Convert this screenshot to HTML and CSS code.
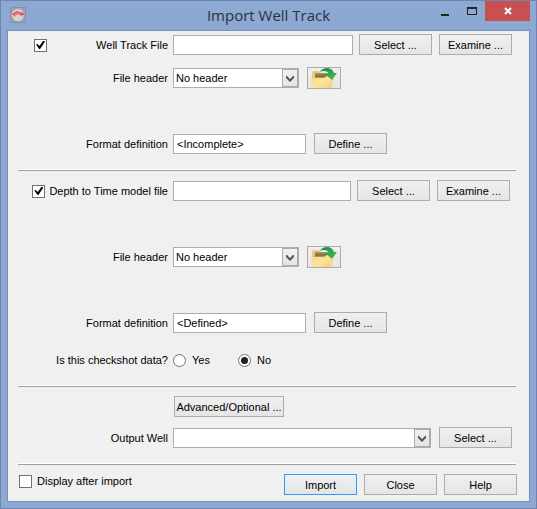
FILE: index.html
```html
<!DOCTYPE html>
<html lang="en">
<head>
<meta charset="utf-8">
<title>Import Well Track</title>
<link rel="stylesheet" href="styles.css">
</head>
<body>
<svg class="defs" aria-hidden="true">
  <defs>
    <linearGradient id="folder-fill" x1="0" y1="0" x2="1" y2="1">
      <stop offset="0" stop-color="#f7d888"/>
      <stop offset=".5" stop-color="#fde39a"/>
      <stop offset="1" stop-color="#f0cd78"/>
    </linearGradient>
    <linearGradient id="folder-inside" x1="0" y1="0" x2="0" y2="1">
      <stop offset="0" stop-color="#b99a5a"/>
      <stop offset=".5" stop-color="#7d6a44"/>
      <stop offset="1" stop-color="#d9b96f"/>
    </linearGradient>
    <linearGradient id="arrow-fill" x1="0" y1="0" x2="1" y2="1">
      <stop offset="0" stop-color="#128a58"/>
      <stop offset="1" stop-color="#4cc04a"/>
    </linearGradient>
    <symbol id="open-folder" viewBox="0 0 32 20">
      <path d="M4 20V4l1-1h6l2 2h10l2 5-2 10z" fill="#ecc978"/>
      <path d="M7 5h15v6H7z" fill="url(#folder-inside)"/>
      <path d="M4 20L3 10h13l3-2h8l-4 12z" fill="url(#folder-fill)"/>
      <path d="M12 4c2-5 12-6 14 1h3l-5 7-7-6h4c-1-3-6-4-9-2z" fill="url(#arrow-fill)"/>
    </symbol>
    <symbol id="chevron" viewBox="0 0 8 7">
      <path d="M0 1h1l3 3 3-3h1v2L4 7 0 3z" fill="#555"/>
    </symbol>
  </defs>
</svg>
<div class="window">
  <header class="titlebar">
    <svg class="app-icon" viewBox="0 0 16 16" aria-hidden="true">
      <rect x=".5" y=".5" width="15" height="15" fill="#92a0b8" stroke="#8192ad"/>
      <circle cx="8" cy="8" r="6.500" fill="#d2d3d4" stroke="#a9a5a6"/>
      <path d="M2 7l3-2 2-1 3 1 4 1v2h-2l1 2-3-2H6l-2 2v-2H2z" fill="#e1595c"/>
      <path d="M5 7h5" stroke="#f1b3b3"/>
    </svg>
    <h1 class="title">Import Well Track</h1>
    <div class="window-controls">
      <button class="caption-button" type="button" aria-label="Minimize"><svg viewBox="0 0 10 10"><path d="M1 8h8v2H1z" fill="#222"/></svg></button>
      <button class="caption-button" type="button" aria-label="Maximize"><svg viewBox="0 0 10 10"><path d="M0 1h10v8H0zM1 3v5h8V3z" fill="#222" fill-rule="evenodd"/></svg></button>
      <button class="caption-button caption-close" type="button" aria-label="Close window"><svg viewBox="0 0 10 10"><path d="M2 2l6 6m0-6l-6 6" stroke="#fff" stroke-width="2"/></svg></button>
    </div>
  </header>
  <form class="client">
    <section class="group">
      <div class="row">
        <div class="lead">
          <input class="check check-lead" type="checkbox" id="use-track" aria-label="Use well track file" checked>
          <label for="track-file">Well Track File</label>
        </div>
        <input class="field grow" type="text" id="track-file">
        <div class="pair">
          <button class="button" type="button">Select ...</button>
          <button class="button" type="button">Examine ...</button>
        </div>
      </div>
      <div class="row row-header">
        <div class="lead"><label for="track-header">File header</label></div>
        <div class="combo combo-small">
          <select id="track-header"><option>No header</option></select>
          <span class="combo-arrow"><svg><use href="#chevron"/></svg></span>
        </div>
        <button class="icon-button" type="button" aria-label="Open file"><svg><use href="#open-folder"/></svg></button>
      </div>
      <div class="row row-format">
        <div class="lead"><label for="track-format">Format definition</label></div>
        <input class="field field-format" type="text" id="track-format" value="&lt;Incomplete&gt;">
        <button class="button" type="button">Define ...</button>
      </div>
    </section>
    <hr class="rule">
    <section class="group">
      <div class="row row-inset">
        <div class="lead lead-check">
          <input class="check" type="checkbox" id="use-model" checked>
          <label for="use-model">Depth to Time model file</label>
        </div>
        <input class="field grow" type="text" aria-label="Depth to Time model file">
        <div class="pair">
          <button class="button" type="button">Select ...</button>
          <button class="button" type="button">Examine ...</button>
        </div>
      </div>
      <div class="row row-header row-header-far">
        <div class="lead"><label for="model-header">File header</label></div>
        <div class="combo combo-small">
          <select id="model-header"><option>No header</option></select>
          <span class="combo-arrow"><svg><use href="#chevron"/></svg></span>
        </div>
        <button class="icon-button" type="button" aria-label="Open file"><svg><use href="#open-folder"/></svg></button>
      </div>
      <div class="row row-format">
        <div class="lead"><label for="model-format">Format definition</label></div>
        <input class="field field-format" type="text" id="model-format" value="&lt;Defined&gt;">
        <button class="button" type="button">Define ...</button>
      </div>
      <div class="row row-radio" role="radiogroup" aria-labelledby="checkshot">
        <div class="lead"><span id="checkshot">Is this checkshot data?</span></div>
        <div class="choices">
          <label class="choice"><input class="radio" type="radio" name="checkshot">Yes</label>
          <label class="choice"><input class="radio" type="radio" name="checkshot" checked>No</label>
        </div>
      </div>
    </section>
    <hr class="rule">
    <section class="group">
      <div class="row">
        <div class="lead"></div>
        <button class="button button-wide" type="button">Advanced/Optional ...</button>
      </div>
      <div class="row row-output">
        <div class="lead"><label for="output-well">Output Well</label></div>
        <div class="combo grow">
          <select id="output-well"><option></option></select>
          <span class="combo-arrow"><svg><use href="#chevron"/></svg></span>
        </div>
        <button class="button" type="button">Select ...</button>
      </div>
    </section>
    <hr class="rule">
    <footer class="footer">
      <label class="display-option"><input class="check" type="checkbox">Display after import</label>
      <div class="actions">
        <button class="button button-default" type="submit">Import</button>
        <button class="button" type="button">Close</button>
        <button class="button" type="button">Help</button>
      </div>
    </footer>
  </form>
</div>
</body>
</html>
```
FILE: styles.css
```css
* {
  box-sizing: border-box;
}

body {
  margin: 0;
  background: #8ca8d3;
  font: 11px/14px "Liberation Sans", Arial, sans-serif;
  color: #000;
}

button,
input,
select {
  margin: 0;
  font: inherit;
  color: inherit;
}

.defs {
  position: absolute;
  width: 0;
  height: 0;
}

.window {
  min-height: 100vh;
  padding: 0 6px 6px;
  border: 1px solid #6e86ac;
  background: #8ca8d3;
}

.titlebar {
  display: grid;
  grid-template-columns: 1fr auto 1fr;
  height: 29px;
}

.app-icon {
  width: 16px;
  height: 16px;
  margin: 6px 0 0 3px;
}

.title {
  margin: 3px 0 0;
  font: 15px/22px "Open Sans", "Segoe UI", sans-serif;
  color: #2b3240;
}

.window-controls {
  display: flex;
  justify-content: flex-end;
  align-items: flex-start;
}

.caption-button {
  display: flex;
  align-items: center;
  justify-content: center;
  width: 27px;
  height: 20px;
  padding: 0;
  border: 0;
  background: none;
}

.caption-button svg {
  width: 10px;
  height: 10px;
}

.caption-close {
  width: 45px;
  background: #c75050;
}

.client {
  padding: 3px 0 6px;
  border: 1px solid #7690b8;
  background: #f0f0f0;
}

.row {
  display: flex;
  align-items: flex-end;
  gap: 8px;
  padding-right: 17px;
}

.row-inset {
  padding-right: 19px;
}

.row-header {
  align-items: center;
  margin-top: 12px;
}

.row-header-far {
  margin-top: 45px;
}

.row-format {
  margin-top: 44px;
}

.row-radio {
  align-items: center;
  margin: 20px 0 18px;
}

.row-output {
  margin-top: 10px;
}

.lead {
  display: flex;
  align-items: center;
  justify-content: flex-end;
  flex: none;
  width: 160px;
  height: 20px;
  margin-right: -3px;
}

.row-radio .lead {
  height: 14px;
}

.lead-check {
  gap: 4px;
}

.check-lead {
  margin-left: 26px;
  margin-right: auto;
}

.grow {
  flex: 1;
  min-width: 0;
}

.pair {
  display: flex;
  gap: 7px;
  margin-left: -2px;
}

.field {
  height: 20px;
  padding: 0 3px;
  border: 1px solid #abadb3;
  background: #fff;
}

.field-format {
  width: 133px;
}

.button {
  width: 73px;
  height: 21px;
  padding: 0;
  border: 1px solid #acacac;
  background: linear-gradient(#f0f0f0, #e5e5e5);
  white-space: nowrap;
}

.button-wide {
  width: 110px;
  margin-left: 1px;
}

.button-default {
  border-color: #3399ff;
}

.icon-button {
  width: 34px;
  height: 22px;
  padding: 0;
  border: 1px solid #acacac;
  background: linear-gradient(#f0f0f0, #e5e5e5);
}

.icon-button svg {
  display: block;
  width: 32px;
  height: 20px;
}

.combo {
  position: relative;
  height: 20px;
}

.combo-small {
  width: 126px;
}

.combo select {
  display: block;
  width: 100%;
  height: 20px;
  padding: 0 18px 0 2px;
  border: 1px solid #abadb3;
  border-radius: 0;
  appearance: none;
  background: #fff;
}

.combo-arrow {
  position: absolute;
  top: 1px;
  right: 1px;
  bottom: 1px;
  display: flex;
  align-items: center;
  justify-content: center;
  width: 16px;
  border: 1px solid #acacac;
  background: linear-gradient(#f0f0f0, #e5e5e5);
  pointer-events: none;
}

.combo-arrow svg {
  width: 8px;
  height: 7px;
}

.check,
.radio {
  display: grid;
  place-content: center;
  flex: none;
  width: 13px;
  height: 13px;
  border: 1px solid #707070;
  appearance: none;
  background: #fff;
}

.check:checked::before {
  content: "";
  width: 9px;
  height: 9px;
  background: #000;
  clip-path: polygon(0 45%, 15% 38%, 38% 60%, 82% 0, 100% 10%, 45% 95%, 35% 95%);
}

.radio {
  border-radius: 50%;
}

.radio:checked::before {
  content: "";
  width: 7px;
  height: 7px;
  border-radius: 50%;
  background: #222;
}

.choices {
  display: flex;
  gap: 28px;
}

.choice,
.display-option {
  display: flex;
  align-items: center;
  gap: 6px;
}

.display-option {
  gap: 5px;
}

.rule {
  height: 2px;
  margin: 15px 13px 9px 10px;
  border: 0;
  border-top: 1px solid #fff;
  border-bottom: 1px solid #a0a0a0;
}

.footer {
  display: flex;
  align-items: flex-start;
  justify-content: space-between;
  padding: 0 12px 0 11px;
}

.actions {
  display: flex;
  gap: 7px;
}
```
